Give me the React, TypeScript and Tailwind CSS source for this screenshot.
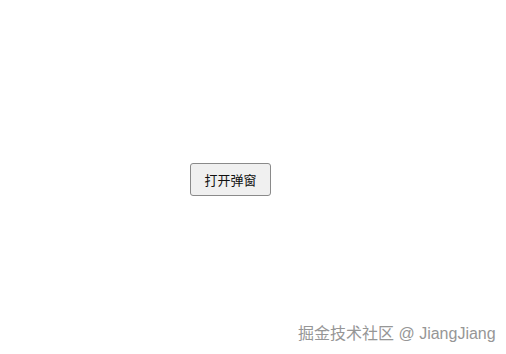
import React from "react";

export default function App() {
  return (
    <div
      className="relative w-[506px] h-[354px] bg-white overflow-hidden"
      style={{ fontFamily: '"Noto Sans CJK SC", "Liberation Sans", sans-serif' }}
    >
      <div className="pt-[163px] pl-[190px]">
        <button className="w-[81px] h-[33px] border border-[#8a8a8a] rounded-[3px] bg-[#f0f0f0] text-[13px] text-[#111] leading-none">
          打开弹窗
        </button>
      </div>
      <div
        className="absolute left-[298px] top-[322px] text-[16px] text-[#969696] whitespace-nowrap"
        style={{ fontFamily: '"Liberation Sans", "Noto Sans CJK SC", sans-serif' }}
      >
        掘金技术社区 @ JiangJiang
      </div>
    </div>
  );
}
